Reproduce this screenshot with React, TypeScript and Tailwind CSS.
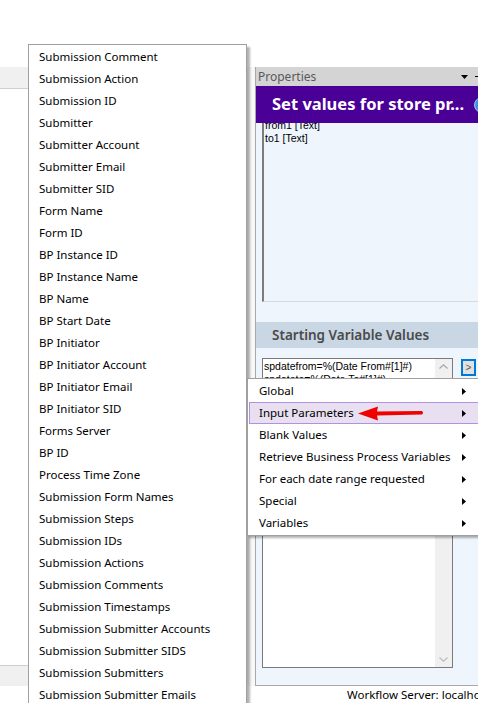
import React from 'react'

const fields = [
  'Submission Comment',
  'Submission Action',
  'Submission ID',
  'Submitter',
  'Submitter Account',
  'Submitter Email',
  'Submitter SID',
  'Form Name',
  'Form ID',
  'BP Instance ID',
  'BP Instance Name',
  'BP Name',
  'BP Start Date',
  'BP Initiator',
  'BP Initiator Account',
  'BP Initiator Email',
  'BP Initiator SID',
  'Forms Server',
  'BP ID',
  'Process Time Zone',
  'Submission Form Names',
  'Submission Steps',
  'Submission IDs',
  'Submission Actions',
  'Submission Comments',
  'Submission Timestamps',
  'Submission Submitter Accounts',
  'Submission Submitter SIDS',
  'Submission Submitters',
  'Submission Submitter Emails',
]

const groups = [
  'Global',
  'Input Parameters',
  'Blank Values',
  'Retrieve Business Process Variables',
  'For each date range requested',
  'Special',
  'Variables',
]

const ui = { fontFamily: '"Noto Sans", "Open Sans", sans-serif' }
const classic = { fontFamily: '"Liberation Sans", Arial, sans-serif' }

function SubArrow() {
  return (
    <svg width="4" height="7" viewBox="0 0 4 7" className="shrink-0">
      <path d="M0 0 L4 3.5 L0 7 Z" fill="#000" />
    </svg>
  )
}

function FieldMenu() {
  return (
    <div
      className="absolute left-[28px] top-[44px] w-[219px] bg-white border border-[#a0a0a0] pt-[1px] shadow-[3px_3px_2px_rgba(0,0,0,0.3)]"
      style={ui}
    >
      {fields.map((f) => (
        <div key={f} className="h-[22px] pl-[10px] flex items-center text-[11.5px] text-black whitespace-nowrap">
          {f}
        </div>
      ))}
    </div>
  )
}

function ContextMenu() {
  return (
    <div
      className="absolute left-[247px] top-[378px] w-[234px] bg-white border border-[#a0a0a0] py-[1px] px-[1px] shadow-[2px_2px_2px_rgba(0,0,0,0.3)]"
      style={ui}
    >
      {groups.map((g) => {
        const active = g === 'Input Parameters'
        return (
          <div
            key={g}
            className={
              'h-[22px] flex items-center pl-[9px] pr-[12px] text-[11.5px] text-black whitespace-nowrap border ' +
              (active ? 'bg-[#e8dff0] border-[#b48fe2]' : 'border-transparent')
            }
          >
            <span className="flex-1">{g}</span>
            <SubArrow />
          </div>
        )
      })}
    </div>
  )
}

// hand-drawn pointer over the menu
function RedArrow() {
  return (
    <svg className="absolute left-[356px] top-[403px]" width="70" height="20" viewBox="0 0 70 20">
      <path d="M66 8 L21 8.6 L22 3.5 L2 10.5 L22 17.5 L21 12.6 L66 11.6 Q68 9.8 66 8 Z" fill="#f00000" />
    </svg>
  )
}

function PropertiesPanel() {
  return (
    <div className="flex-1 flex flex-col border-l border-[#a8a8a8] min-w-0 overflow-hidden">
      <div className="h-[19px] shrink-0 bg-[#d4d4d4] flex items-center pl-[2px] text-[12px] text-[#5a5a5a]" style={ui}>
        <span className="flex-1">Properties</span>
        <svg width="7" height="4" viewBox="0 0 7 4" className="mr-[7px]">
          <path d="M0 0 L7 0 L3.5 4 Z" fill="#000" />
        </svg>
        <div className="w-[3px] h-[1px] bg-black" />
      </div>
      <div className="h-[37px] shrink-0 bg-[#4a0096] flex items-center pl-[16px]" style={ui}>
        <span className="flex-1 text-white font-bold text-[16.5px] whitespace-nowrap">Set values for store pr...</span>
        <div className="w-[16px] h-[16px] rounded-full bg-[#3a92e0] border border-[#9cc9f0] mr-[-12px] shrink-0" />
      </div>
      <div className="flex-1 bg-[#eef5fd] flex flex-col border-b border-[#a8a8a8]">
        <div
          className="ml-[6px] h-[179px] shrink-0 overflow-hidden border-l-2 border-b border-l-[#7c7c7c] border-b-[#d8d8d8] pl-[1px] text-[10.5px] leading-[13px] text-black"
          style={classic}
        >
          <div className="-mt-[4px]">from1 [Text]</div>
          <div>to1 [Text]</div>
        </div>
        <div className="h-[26px] mt-[20px] shrink-0 bg-[#c9d6e3] flex items-center pl-[16px] text-[13.5px] font-semibold text-[#4a4a4a]" style={ui}>
          Starting Variable Values
        </div>
        <div className="flex mt-[10px] ml-[6px] gap-[8px]">
          <div className="w-[191px] h-[310px] border border-[#7a7a7a] bg-white flex">
            <div className="flex-1 pl-[1px] pt-[1px] text-[10.5px] leading-[13px] text-black whitespace-nowrap overflow-hidden" style={classic}>
              <div>spdatefrom=%(Date From#[1]#)</div>
              <div>spdateto=%(Date To#[1]#)</div>
            </div>
            <div className="w-[17px] bg-[#f0f0f0] flex flex-col items-center justify-between py-[5px]">
              <svg width="9" height="5" viewBox="0 0 9 5">
                <path d="M0.5 4.5 L4.5 0.8 L8.5 4.5" fill="none" stroke="#a6a6a6" strokeWidth="1.2" />
              </svg>
              <svg width="9" height="5" viewBox="0 0 9 5">
                <path d="M0.5 0.5 L4.5 4.2 L8.5 0.5" fill="none" stroke="#bdbdbd" strokeWidth="1.2" />
              </svg>
            </div>
          </div>
          <div
            className="w-[15px] h-[17px] mt-[1px] border-2 border-[#0078d7] bg-[#e1e1e1] flex items-center justify-center text-[10px] leading-none text-[#555]"
            style={classic}
          >
            &gt;
          </div>
        </div>
      </div>
    </div>
  )
}

export default function App() {
  return (
    <div className="relative w-[478px] h-[703px] overflow-hidden bg-white">
      <div className="h-[67px]" />
      <div className="flex h-[619px]">
        <div className="w-[246px] shrink-0 flex flex-col">
          <div className="h-[22px] bg-[#f0f0f0] border-b border-[#cfcfcf]" />
          <div className="flex-1 bg-white" />
          <div className="h-[21px] bg-[#f0f0f0] border-t border-[#cfcfcf]" />
        </div>
        <div className="w-[9px] shrink-0 bg-[#f7f7f7]" />
        <PropertiesPanel />
      </div>
      <div className="h-[17px] pl-[347px] text-[11.5px] leading-[17px] text-black whitespace-nowrap" style={ui}>
        Workflow Server: localhost
      </div>
      <FieldMenu />
      <ContextMenu />
      <RedArrow />
    </div>
  )
}
